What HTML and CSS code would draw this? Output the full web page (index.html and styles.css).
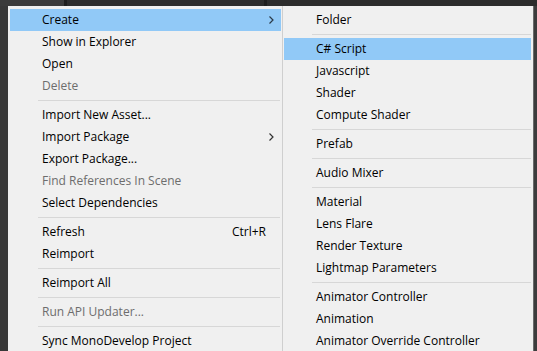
FILE: index.html
```html
<!DOCTYPE html>
<html>
<head>
<meta charset="utf-8">
<link rel="stylesheet" href="styles.css">
</head>
<body>
<div class="topbar">
  <span class="tb-seg tb-a"></span>
  <span class="tb-div"></span>
  <span class="tb-seg tb-b"></span>
  <span class="tb-div"></span>
  <span class="tb-seg tb-c"></span>
</div>
<div class="workspace">
  <div class="gutter"></div>
  <div class="menu main">
    <div class="item hl"><span class="label">Create</span><svg class="arrow" width="5" height="8" viewBox="0 0 5 8"><polyline points="0.5,0.5 4,4 0.5,7.5" fill="none" stroke="#2b3a48" stroke-width="1.2"/></svg></div>
    <div class="item"><span class="label">Show in Explorer</span></div>
    <div class="item"><span class="label">Open</span></div>
    <div class="item dis"><span class="label">Delete</span></div>
    <div class="sep"></div>
    <div class="item"><span class="label">Import New Asset...</span></div>
    <div class="item"><span class="label">Import Package</span><svg class="arrow" width="5" height="8" viewBox="0 0 5 8"><polyline points="0.5,0.5 4,4 0.5,7.5" fill="none" stroke="#333" stroke-width="1.2"/></svg></div>
    <div class="item"><span class="label">Export Package...</span></div>
    <div class="item dis"><span class="label">Find References In Scene</span></div>
    <div class="item"><span class="label">Select Dependencies</span></div>
    <div class="sep"></div>
    <div class="item"><span class="label">Refresh</span><span class="shortcut">Ctrl+R</span></div>
    <div class="item"><span class="label">Reimport</span></div>
    <div class="sep"></div>
    <div class="item"><span class="label">Reimport All</span></div>
    <div class="sep"></div>
    <div class="item dis"><span class="label">Run API Updater...</span></div>
    <div class="sep"></div>
    <div class="item"><span class="label">Sync MonoDevelop Project</span></div>
  </div>
  <div class="menu sub">
    <div class="item"><span class="label">Folder</span></div>
    <div class="sep"></div>
    <div class="item hl"><span class="label">C# Script</span></div>
    <div class="item"><span class="label">Javascript</span></div>
    <div class="item"><span class="label">Shader</span></div>
    <div class="item"><span class="label">Compute Shader</span></div>
    <div class="sep"></div>
    <div class="item"><span class="label">Prefab</span></div>
    <div class="sep"></div>
    <div class="item"><span class="label">Audio Mixer</span></div>
    <div class="sep"></div>
    <div class="item"><span class="label">Material</span></div>
    <div class="item"><span class="label">Lens Flare</span></div>
    <div class="item"><span class="label">Render Texture</span></div>
    <div class="item"><span class="label">Lightmap Parameters</span></div>
    <div class="sep"></div>
    <div class="item"><span class="label">Animator Controller</span></div>
    <div class="item"><span class="label">Animation</span></div>
    <div class="item"><span class="label">Animator Override Controller</span></div>
  </div>
  <div class="rightgap"></div>
</div>
</body>
</html>
```

FILE: styles.css
```css
html, body {
  margin: 0;
  padding: 0;
  width: 537px;
  height: 351px;
  overflow: hidden;
  background: #3a3a3a;
  font-family: "Open Sans", "Noto Sans", sans-serif;
  font-size: 12px;
  color: #000;
}

.topbar {
  height: 6px;
  display: flex;
  background: #2e2e2e;
}
.tb-seg { display: block; height: 6px; }
.tb-a { width: 64px; background: #3b3b3b; }
.tb-b { width: 197px; background: #2c2c2c; }
.tb-c { flex: 1; background: #2c2c2c; }
.tb-div { display: block; width: 3px; height: 6px; background: #1e1e1e; }

.workspace {
  display: flex;
  height: 345px;
}

.gutter {
  width: 8px;
  background: #383838;
  flex: none;
}

.menu {
  background: #f0f0f0;
  padding-top: 3px;
  flex: none;
  overflow: hidden;
}

.main {
  width: 274px;
  border-right: 1px solid #cfcfcf;
}

.sub {
  width: 250px;
}

.rightgap {
  flex: 1;
  background: #3c3c3c;
  border-left: 1px solid #6a6a6a;
}

.item {
  height: 22px;
  line-height: 16px;
  padding-bottom: 1px;
  box-sizing: border-box;
  display: flex;
  align-items: center;
  position: relative;
  white-space: nowrap;
}

.main .item {
  margin: 0 1px 0 2px;
  padding-left: 32px;
}

.sub .item {
  margin: 0 2px 0 1px;
  padding-left: 32px;
}

.item.hl {
  background: #91c9f7;
}

.item.dis {
  color: #6d6d6d;
}

.label {
  flex: 1;
}

.shortcut {
  padding-right: 15px;
}

.arrow {
  position: absolute;
  right: 7px;
  top: 7px;
}

.sep {
  height: 7px;
  position: relative;
}
.sep::after {
  content: "";
  position: absolute;
  left: 0;
  right: 2px;
  top: 3px;
  height: 1px;
  background: #d7d7d7;
}
.main .sep::after { left: 30px; }
.sub .sep::after { left: 29px; }
```
